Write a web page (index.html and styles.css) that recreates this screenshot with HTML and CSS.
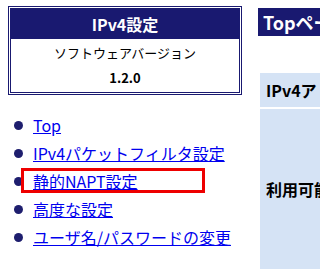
FILE: index.html
```html
<!DOCTYPE html>
<html lang="ja">
<head>
    <meta charset="UTF-8">
    <title>IPv4設定</title>
    <link rel="stylesheet" href="styles.css">
</head>
<body>
    <div class="page">
        <div class="side">
            <div class="info-box">
                <div class="info-title">IPv4設定</div>
                <div class="info-label">ソフトウェアバージョン</div>
                <div class="info-version">1.2.0</div>
            </div>
            <ul class="menu">
                <li><span class="dot"></span><a href="#">Top</a></li>
                <li><span class="dot"></span><a href="#">IPv4パケットフィルタ設定</a></li>
                <li><span class="dot"></span><a href="#">静的NAPT設定</a><span class="mark"></span></li>
                <li><span class="dot"></span><a href="#">高度な設定</a></li>
                <li><span class="dot"></span><a href="#">ユーザ名/パスワードの変更</a></li>
            </ul>
        </div>
        <div class="main">
            <div class="page-title">Topページ</div>
            <table class="status">
                <tr>
                    <td class="row-head">IPv4アドレス</td>
                </tr>
                <tr>
                    <td class="row-head tall">利用可能</td>
                </tr>
            </table>
        </div>
    </div>
</body>
</html>
```

FILE: styles.css
```css
body {
    margin: 0;
    font-family: "Noto Sans CJK JP", "Noto Sans", sans-serif;
    color: #000;
    background: #fff;
    overflow: hidden;
}

.page {
    display: flex;
    padding: 6px 0 0 8px;
}

.side {
    width: 234px;
    flex: none;
}

.info-box {
    border: 3px double #191970;
    text-align: center;
}

.info-title {
    height: 30px;
    line-height: 30px;
    background-color: #191970;
    color: #fff;
    font-size: 16px;
    font-weight: bold;
}

.info-label {
    height: 26px;
    line-height: 26px;
    margin-top: 1px;
    font-size: 13px;
}

.info-version {
    height: 26px;
    line-height: 24px;
    font-size: 13px;
    font-weight: bold;
}

.menu {
    list-style: none;
    margin: 16px 0 0 0;
    padding: 0;
}

.menu li {
    position: relative;
    display: flex;
    align-items: center;
    height: 28px;
    font-size: 16px;
}

.menu a {
    color: #0000ee;
    line-height: 20px;
}

.dot {
    width: 9px;
    height: 9px;
    margin: 1px 10px 0 6px;
    border-radius: 50%;
    background-color: #1e1e6e;
}

.mark {
    position: absolute;
    left: 13px;
    top: 1px;
    width: 184px;
    height: 25px;
    box-sizing: border-box;
    border: 3px solid #ee0000;
}

.main {
    margin-left: 16px;
    flex: 1;
    min-width: 0;
}

.page-title {
    margin-top: 2px;
    height: 28px;
    line-height: 28px;
    padding-left: 5px;
    background-color: #191970;
    color: #fff;
    font-size: 18px;
    font-weight: bold;
    white-space: nowrap;
}

.status {
    margin-top: 35px;
    border-spacing: 2px;
}

.status td {
    background-color: #d5e3f5;
    padding: 0 6px;
    font-size: 16px;
    font-weight: bold;
    white-space: nowrap;
}

.row-head {
    width: 120px;
    height: 34px;
}

.tall {
    height: 160px;
}
```
